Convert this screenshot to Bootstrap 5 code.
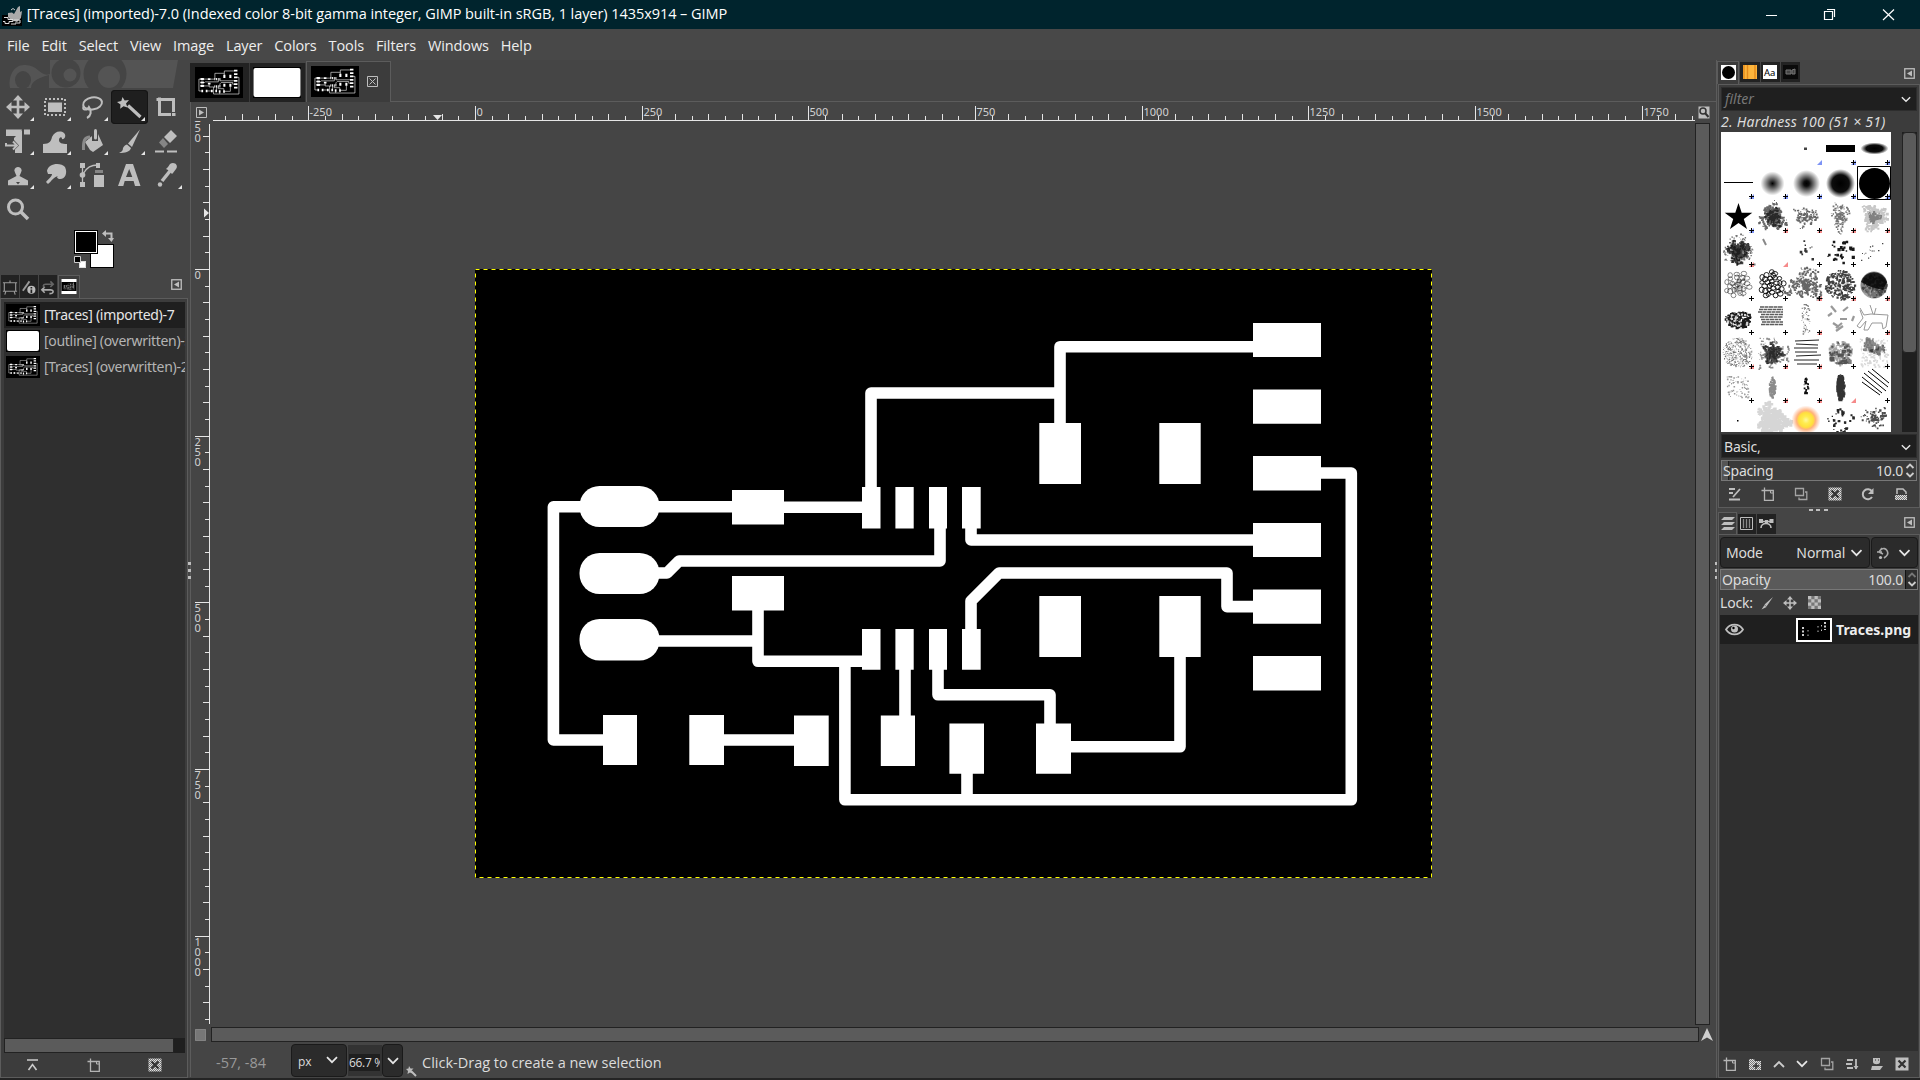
<!DOCTYPE html>
<html lang="en">
<head>
<meta charset="utf-8">
<title>GIMP</title>
<link href="https://cdn.jsdelivr.net/npm/bootstrap@5.3.0/dist/css/bootstrap.min.css" rel="stylesheet">
<style>
body{width:1920px;height:1080px;overflow:hidden;background:#454545;color:#dcdcdc;font-family:"Noto Sans","Open Sans",sans-serif;font-size:14px;line-height:20px}
svg{display:block;flex:none}
.titlebar{height:29px;background:#00242d;color:#fff;font-family:"Open Sans","Noto Sans",sans-serif;font-size:14.5px}
.titlebar .caption{letter-spacing:-.06px;margin-left:1px;padding-bottom:1px}
.menubar{height:31px;padding:2px 0 0 7px;gap:12px;background:#484848;color:#eee;font-family:"Open Sans","Noto Sans",sans-serif;font-size:14.5px;letter-spacing:-.13px}
.workarea{height:1018px}
.bottomedge{height:2px;background:#242424}
.leftdock{width:190px}
.banner{height:30px}
.toolgrid{display:grid;grid-template-columns:repeat(5,37px);grid-template-rows:repeat(4,34px)}
.toolgrid .sel{background:#1f1f1f;border-radius:4px;box-shadow:inset 0 0 0 1px #151515}
.ic{fill:#bebebe;stroke:none}
.ln{fill:none;stroke:#bebebe;stroke-width:2}
.swatches{height:49px}
.docktabs{height:23px;padding-left:1px}
.dtab{width:19px;height:20px;background:#222;margin-right:1px}
.docktabs .dtab{width:18px}
.dtab.on,.docktabs .dtab.on{background:#3c3c3c;border:1px solid #5c5c5c;border-bottom:0;height:23px;width:22px}
.dockbody{border:1px solid #5c5c5c;background:#3c3c3c}
.imglist{background:#2f2f2f;width:181px;height:736px;overflow:hidden;flex:none}
.imgrow{height:26px;padding-left:2px;gap:4px;color:#b4b4b4;white-space:nowrap;font-size:14px;letter-spacing:-.3px}
.imgrow.on{background:#1f1f1f;color:#e6e6e6}
.hbar{background:#5b5b5b;border:1px solid #222}
.listscroll{background:#1f1f1f;width:181px;height:15px;flex:none}
.center{width:1526px}
.imgtabs{height:42px}
.itab{background:#222;border-right:1px solid #3a3a3a}
.itab.on{background:#3c3c3c;border:1px solid #5c5c5c;border-bottom:0}
.tabline{border-bottom:1px solid #5c5c5c}
.viewframe{border-left:1px solid #5c5c5c}
.canvasarea{width:1483px;height:904px;padding:148px 0 0 264px}
.gbox{background:#2b2b2b;border:1px solid #1a1a1a;border-radius:4px}
.statusbar{height:33px;font-family:"Open Sans","Noto Sans",sans-serif;font-size:14.5px}
.rightdock{width:204px;border-left:1px solid #5c5c5c}
.entry{background:#1f1f1f;border:1px solid #2d2d2d}
.spin{border:1px solid #777;background:#3a3a3a;height:21px;letter-spacing:-.2px}
.spacingbar{background:linear-gradient(90deg,#555 6px,#222 6px,#222 7px,#3a3a3a 7px)}
.layers{background:#2f2f2f;height:436px}
.brushview{height:300px}
.nowrap{white-space:nowrap}
</style>
</head>
<body class="d-flex flex-column">
<svg width="0" height="0" class="position-absolute">
 <defs>
  <symbol id="pcb" viewBox="475 269 957 609" preserveAspectRatio="none">
   <rect x="475" y="269" width="957" height="609" fill="#000"/>
   <g fill="none" stroke="#fff" stroke-width="11.6" stroke-linejoin="round">
    <path d="M620 506.8H553.4V740H610M650 506.8H740M780 507.2H871V393H1060M1060 430V346.7H1260M1315 473H1351.3V799.8H844.9V661.3M971 520V540H1260M940 520V561H679L667 573H650M971 640V601L999 573H1227V606.6H1260M758 605V661.3H870M650 641H758M905 660V720M938 660V694.8H1050V730M1065 746.8H1180V650M967 770V800M720 740H800"/>
   </g>
   <g fill="#fff">
    <rect x="579.5" y="486" width="80" height="41" rx="20"/><rect x="579.5" y="553" width="80" height="41" rx="20"/><rect x="579.5" y="619" width="80" height="41.500" rx="20"/>
    <path d="M732 490h52v34.600h-52zM732 576h52v34.400h-52zM862 487h18.500v41.600h-18.500zM895.400 487h18.300v41.600h-18.300zM929 487h18v41.600h-18zM962 487h18.700v41.600h-18.700zM862 629h18.500v40.700h-18.500zM895.400 629h18.300v40.700h-18.300zM929 629h18v40.700h-18zM962 629h18.700v40.700h-18.700z"/>
    <path d="M1039.300 423H1081V484H1039.300zM1159.300 423H1200.700V484H1159.300zM1039.300 596H1081V657H1039.300zM1159.300 596H1200.700V657H1159.300z"/>
    <path d="M1253 323h68v34h-68zM1253 389.400h68v34.400h-68zM1253 456h68v34.400h-68zM1253 523h68v34h-68zM1253 589.400h68v34.400h-68zM1253 656h68v34.400h-68z"/>
    <path d="M603 715h34v50h-34zM689.300 715h34.700v50h-34.700zM794 715.400h34.700v50.600h-34.700zM880.800 715.400h34.200v50.600h-34.200zM949.400 723.400h34.600v50.300h-34.600zM1036 723.400h35v50.300h-35z"/>
   </g>
  </symbol>
  <symbol id="collapse" viewBox="0 0 11 11"><rect x=".75" y=".75" width="9.500" height="9.500" fill="none" stroke="#bebebe" stroke-width="1.300"/><path d="M8 2.500v6L3 5.500z" fill="#bebebe"/></symbol>
  <symbol id="chev" viewBox="0 0 12 8"><path d="M1 1.200L6 6.200L11 1.200" fill="none" stroke="#e6e6e6" stroke-width="1.700"/></symbol>
  <symbol id="newdoc" viewBox="0 0 14 14"><path d="M5.500 3.500H12.300V13.300H3.500V6M3.500 .5V6.500M.5 3.500H6.500" fill="none" stroke="#b4b4b4" stroke-width="1.300"/><path d="M9.500 3v3h3" fill="none" stroke="#b4b4b4"/></symbol>
  <symbol id="dup" viewBox="0 0 14 14"><path d="M1.500 1.500H9.500V8.500H1.500zM11 5H12.800V12.500H5V10.500" fill="none" stroke="#a4a4a4" stroke-width="1.300"/></symbol>
  <symbol id="del" viewBox="0 0 14 14"><rect x=".5" y=".5" width="13" height="13" fill="#bebebe"/><path d="M3.500 3.500L10.500 10.500M10.500 3.500L3.500 10.500" stroke="#333" stroke-width="2.200"/></symbol>
  <pattern id="chk" width="2" height="2" patternUnits="userSpaceOnUse"><rect width="2" height="2" fill="#777"/><path d="M0 0h1v1h-1zM1 1h1v1h-1z" fill="#e0e0e0"/></pattern>
  <symbol id="delx" viewBox="0 0 14 14"><rect x=".5" y=".5" width="13" height="13" fill="url(#chk)"/><path d="M3.500 3.500L10.500 10.500M10.500 3.500L3.500 10.500" stroke="#333" stroke-width="2.200"/></symbol>
  <symbol id="more" viewBox="0 0 4 4"><path d="M4 0V4H0z" fill="#e6e6e6"/></symbol>
 </defs>
</svg>

<header class="titlebar d-flex align-items-center">
 <svg width="22" height="24" viewBox="0 0 22 24"><path d="M2 12h20v11H2z" fill="#000"/><path d="M8 10L12 9.500L14 11L18 4L20 3L20 9L22 8L21 15L17 19L11 17L8 14z" fill="#aaa"/><path d="M11 7l2-1.500 2 1.500" stroke="#ccc" fill="none"/><path d="M4 14.500h4v2h5v2H9v2H5v-2H3M14 17h6v3h-5M11 21h5" fill="none" stroke="#ddd"/></svg>
 <span class="caption nowrap">&nbsp;[Traces] (imported)-7.0 (Indexed color 8-bit gamma integer, GIMP built-in sRGB, 1 layer) 1435x914 – GIMP</span>
 <div class="ms-auto d-flex">
  <svg width="58" height="28" viewBox="0 0 58 28"><path d="M20 14.500H31" stroke="#fff"/></svg>
  <svg width="58" height="28" viewBox="0 0 58 28"><path d="M20.500 10.500h8v8h-8zM23 8.500h7.500v7.500" fill="none" stroke="#fff" stroke-width="1.200"/></svg>
  <svg width="58" height="28" viewBox="0 0 58 28"><path d="M21 8.500L32 19M32 8.500L21 19" stroke="#fff" stroke-width="1.200"/></svg>
 </div>
</header>
<nav class="menubar d-flex align-items-center">
 <span>File</span><span>Edit</span><span>Select</span><span>View</span><span>Image</span><span>Layer</span><span>Colors</span><span>Tools</span><span>Filters</span><span>Windows</span><span>Help</span>
</nav>

<main class="workarea d-flex">
 <aside class="leftdock d-flex flex-column">
  <svg class="banner" width="190" height="30" viewBox="0 0 190 30"><path d="M50 0H178L173 28H10C8 16 14 5 24 5C38 4 41 18 50 14z" fill="#545454"/><circle cx="66" cy="13" r="14.500" fill="#454545"/><circle cx="70" cy="15" r="6.500" fill="#545454"/><circle cx="105" cy="14" r="21.500" fill="#454545"/><circle cx="109" cy="17" r="11" fill="#545454"/><ellipse cx="23" cy="20" rx="8" ry="9" fill="#454545"/><path d="M31 28C31 20 42 17 49 15V28z" fill="#454545"/><path d="M0 28H190V30H0z" fill="#454545"/></svg>
  <div class="toolgrid">
   <svg width="37" height="34"><path d="M18 9V25M10 17H26" stroke="#bebebe" stroke-width="2.600"/><path class="ic" d="M18 5l5 5.500h-10zM18 29l5-5.500h-10zM6 17l5.500-5v10zM30 17l-5.500-5v10z"/><use href="#more" x="30" y="27" width="4" height="4"/></svg>
   <svg width="37" height="34"><rect x="8" y="9" width="20" height="16" class="ln" stroke-dasharray="2 2"/><rect x="11" y="12.500" width="14" height="9.500" class="ic"/><use href="#more" x="30" y="27" width="4" height="4"/></svg>
   <svg width="37" height="34"><ellipse cx="18.500" cy="13.500" rx="9.500" ry="6" transform="rotate(-10 18 13)" class="ln"/><path class="ln" d="M10 16c-3 4 3 5 5 1c3 4 2 9-2 11"/><use href="#more" x="30" y="27" width="4" height="4"/></svg>
   <svg width="37" height="34" class="sel"><path class="ic" d="M11.500 7l2.200 3.500 4.300-.5-3 3.500 1.500 4-4-1.300-3.300 2.600.3-4.300-3.500-2.500 4.300-1z"/><path d="M17 15.500L29.500 27" stroke="#bebebe" stroke-width="3.200"/><use href="#more" x="30" y="27" width="4" height="4"/></svg>
   <svg width="37" height="34"><path d="M8.500 9.500H25.500V22M11.500 7.500V24.500H23" fill="none" stroke="#bebebe" stroke-width="3"/><path class="ic" d="M24 23h3.500v3h-3.500z"/></svg>

   <svg width="37" height="34"><path class="ic" d="M6 5.500H22L17 12H6zM24 5.500H30V10.500H24zM22 6V29H15V25.500L19 21.500L14 16V14z"/><path class="ln" d="M6 19v2.500h10M13 17.500l4 4-4 4"/><use href="#more" x="30" y="27" width="4" height="4"/></svg>
   <svg width="37" height="34"><path class="ic" d="M6 29V20C13 20 14 17 15 13C17 8 23 6 27 9C30 12 27 16 25 15C25 12 22 13 22 16C22 19 25 20 30 20V29z"/><use href="#more" x="30" y="27" width="4" height="4"/></svg>
   <svg width="37" height="34"><path class="ic" d="M11 18L18 12V17h6v-7L29 21L19 28L16 26z"/><path d="M21.500 6.500V14" stroke="#bebebe" stroke-width="3" stroke-linecap="round"/><path d="M16 13C11 13 9 16 9.500 26" fill="none" stroke="#8a8a8a" stroke-width="3"/><use href="#more" x="30" y="27" width="4" height="4"/></svg>
   <svg width="37" height="34"><path class="ic" d="M29 5.500L21 23L17 19.500zM16 20.500l4 3.500c-1 4-6 5-12 5c3-1 4-3 4-5c1-2 2-3 4-3.500z"/><use href="#more" x="30" y="27" width="4" height="4"/></svg>
   <svg width="37" height="34"><path class="ic" d="M23 6L29 12L22 19L16 13zM7 26.500h9v2h-9zM19 26.500h10v2h-10z"/><path fill="#858585" d="M15 14l5 6-4 4-5-5.500z"/></svg>

   <svg width="37" height="34"><path class="ic" d="M18 9a3.500 3.500 0 0 1 3 5.500L19.500 18L28 22.500V27.300H8V22.500L16.500 18L15 14.500A3.500 3.500 0 0 1 18 9z"/><path d="M16 24l2 2.500 2-2.500z" fill="#454545"/><use href="#more" x="30" y="27" width="4" height="4"/></svg>
   <svg width="37" height="34"><path class="ic" d="M10 13C11 5 24 4 28 9C31 15 28 22 22 21C19 20 20 18 22 18C17 18 14 24 11 26L9 24C11 21 15 19 15 16H11z"/><use href="#more" x="30" y="27" width="4" height="4"/></svg>
   <svg width="37" height="34"><path class="ic" d="M6 5h5v5h-5zM6 24h5v5h-5zM22 5h4v5h-4zM20 17h10v12h-10z"/><path fill="#858585" d="M21 12h8v3h-8z"/><circle cx="8.500" cy="17" r="2.800" class="ic"/><path fill="none" stroke="#bebebe" stroke-width="1.300" d="M8.500 8V26M9 16C13 9 17 7 24 7"/></svg>
   <svg width="37" height="34"><path class="ic" fill-rule="evenodd" d="M15 6H22L29.500 28H24L22.600 23H13.700L12.300 28H7zM18.200 11L15 19H21.300z"/></svg>
   <svg width="37" height="34"><path class="ic" d="M22 6C26 3 31 7 28 11L25 15L24 16L20 12L18 11L20 9z"/><path d="M22 13L14 23" stroke="#bebebe" stroke-width="3.500"/><circle cx="12" cy="26.500" r="2.200" class="ic"/><use href="#more" x="30" y="27" width="4" height="4"/></svg>

   <svg width="37" height="34"><circle cx="15.500" cy="15" r="7" fill="none" stroke="#bebebe" stroke-width="3"/><path d="M21 20L28 27" stroke="#bebebe" stroke-width="3.500"/></svg>
  </div>
  <svg class="swatches" width="190" height="49" viewBox="0 226 190 49"><path d="M90 244h24v24h-24z" fill="#000"/><path d="M91 245h22v22h-22z" fill="#fff"/><path d="M74 230h24v24h-24z" fill="#000"/><path d="M75 231h22v22h-22z" fill="#fff"/><path d="M76 232h20v20h-20z" fill="#000"/><path d="M105 233.500H111.500V239" fill="none" stroke="#bebebe" stroke-width="2"/><path class="ic" d="M102 233.500l4-3.500v7zM111.500 242l-3.500-4h6z"/><path d="M79 261h7v7h-7z" fill="#ddd"/><path d="M80 262h5v5h-5z" fill="#fff"/><path d="M74.500 256.500h6v6h-6z" fill="#000" stroke="#ccc"/></svg>
  <div class="docktabs d-flex align-items-end">
   <div class="dtab h-100 pt-1"><svg width="18" height="17" viewBox="0 0 19 17"><path d="M3.500 3.500h12v9h-12zM2 3.500h15M2 12.500h15M9.500 1v2M5 13l-1 3M14 13l1 3" fill="none" stroke="#999" stroke-width="1.200"/></svg></div>
   <div class="dtab h-100 pt-1"><svg width="18" height="17" viewBox="0 0 19 17"><path d="M3 12L10 2" stroke="#999" stroke-width="2"/><circle cx="12" cy="11" r="4.300" fill="#bbb"/><path d="M12 8v1.500M12 10.500v4" stroke="#222" stroke-width="1.800"/></svg></div>
   <div class="dtab h-100 pt-1"><svg width="18" height="17" viewBox="0 0 19 17"><path d="M3 11H12C16 11 16 15 11 15M6 8L3 11L6 14" fill="none" stroke="#aaa" stroke-width="1.700"/><path d="M14 5H7C4 5 4 8 6 8M12 2l3 3-3 3" fill="none" stroke="#666" stroke-width="1.700"/></svg></div>
   <div class="dtab on"><svg width="20" height="20" viewBox="0 0 20 20"><path d="M2.500 3h15v15h-15z" fill="#fff"/><path d="M2.500 6h15v9h-15z" fill="#000"/><use href="#pcb" x="3.500" y="6" width="13" height="9"/></svg></div>
   <svg width="11" height="11" class="ms-auto me-2 mb-2"><use href="#collapse" width="11" height="11"/></svg>
  </div>
  <div class="dockbody d-flex flex-column flex-grow-1" style="width:188px;padding:3px 0 0 3px">
   <div class="imglist">
    <div class="imgrow on d-flex align-items-center"><svg width="34" height="22"><use href="#pcb" width="34" height="22"/></svg><span>[Traces] (imported)-7</span></div>
    <div class="imgrow d-flex align-items-center"><svg width="34" height="22"><path d="M0 0h34v22h-34z"/><rect x="1" y="1" width="32" height="20" rx="2" fill="#fff"/></svg><span>[outline] (overwritten)-3</span></div>
    <div class="imgrow d-flex align-items-center"><svg width="34" height="22"><use href="#pcb" width="34" height="22"/></svg><span>[Traces] (overwritten)-2</span></div>
   </div>
   <div class="listscroll"><div class="hbar h-100" style="width:170px"></div></div>
   <div class="d-flex align-items-center flex-grow-1" style="padding-left:22px;gap:47px"><svg width="14" height="14"><path d="M1 2H12M2.500 12L6.500 6.500L10.500 12" fill="none" stroke="#ccc" stroke-width="1.600"/></svg><svg width="14" height="14"><use href="#newdoc" width="14" height="14"/></svg><svg width="14" height="14"><use href="#delx" width="14" height="14"/></svg></div>
  </div>
 </aside>

 <section class="center d-flex flex-column">
  <div class="imgtabs d-flex align-items-end">
   <div class="itab" style="width:60px;height:39px;padding:4px 0 0 5px"><svg width="48" height="31"><use href="#pcb" width="48" height="31"/></svg></div>
   <div class="itab" style="width:56px;height:39px;padding:4px 0 0 3px"><svg width="48" height="31"><path d="M0 0h48v31h-48z"/><rect x=".5" y="1" width="47" height="29" rx="2" fill="#fff"/></svg></div>
   <div class="itab on d-flex" style="width:85px;height:41px;padding:4px 0 0 4px;gap:8px"><svg width="48" height="31"><use href="#pcb" width="48" height="31"/></svg><svg width="11" height="31"><path d="M.5 10.500h10v10h-10zM2.500 12.500l6 6M8.500 12.500l-6 6" fill="none" stroke="#bebebe"/></svg></div>
   <div class="tabline flex-grow-1"></div>
  </div>
  <div class="viewframe d-flex" style="height:19px;padding-left:1px">
   <svg width="19" height="19"><path d="M4.500 5.500h10v10h-10z" fill="none" stroke="#bebebe"/><path d="M7 7.500v6l5-3z" fill="#bebebe"/></svg>
   <svg id="hruler" width="1484" height="19" viewBox="211 102 1484 19"></svg>
   <svg width="19" height="19"><path d="M3.500 4.500h11v12h-11z" fill="#bebebe"/><circle cx="8" cy="9" r="3" fill="none" stroke="#333" stroke-width="1.500"/><path d="M10 11l3.500 4" stroke="#333" stroke-width="2"/></svg>
  </div>
  <div class="viewframe d-flex" style="height:904px;padding-left:1px">
   <svg id="vruler" width="19" height="904" viewBox="192 121 19 904"></svg>
   <div class="canvasarea"><svg width="957" height="609"><use href="#pcb" width="957" height="609"/><rect x=".5" y=".5" width="956" height="608" fill="none" stroke="#ff0" stroke-dasharray="4 4"/></svg></div>
   <div class="hbar" style="width:15px;height:902px;margin:2px 0 0 1px"></div>
  </div>
  <div class="viewframe d-flex align-items-center" style="height:19px;padding-left:4px;gap:5px">
   <svg width="11" height="12"><rect x=".5" y=".5" width="10" height="11" fill="#777" stroke="#aaa" stroke-dasharray="1 1"/></svg>
   <div class="hbar" style="width:1488px;height:15px"></div>
   <svg width="14" height="14" style="margin-left:-4px"><path d="M7 0l6 13-6-3.500-6 3.500z" fill="#d0d0d0"/></svg>
  </div>
  <div class="viewframe statusbar d-flex align-items-center">
   <span class="pt-1" style="color:#999;width:75px;margin-left:25px">-57, -84</span>
   <div class="gbox d-flex align-items-center justify-content-between" style="width:56px;height:33px;padding:2px 8px 0 6px;font-size:12px"><span>px</span><svg width="12" height="8" class="mb-1"><use href="#chev" width="12" height="8"/></svg></div>
   <div style="background:#333;width:34px;height:31px;margin-left:1px;padding:9px 0 0 1px"><div class="nowrap overflow-hidden" style="background:#1f1f1f;width:31px;height:17px;font-size:12px;line-height:17px;letter-spacing:-.3px">66.7 %</div></div>
   <div class="gbox d-flex align-items-center justify-content-center" style="width:21px;height:33px"><svg width="12" height="8"><use href="#chev" width="12" height="8"/></svg></div>
   <svg width="12" height="12" class="align-self-end" style="margin-left:2px"><path class="ic" d="M4 1l1.500 2.500 3 0-2 2 1 3-2.500-1-2.500 1.500.5-3-2-2 2.500-.5z"/><path d="M6 6l5 5" stroke="#bebebe" stroke-width="2"/></svg>
   <span class="pt-1" style="margin-left:5px">Click-Drag to create a new selection</span>
  </div>
 </section>

 <aside class="rightdock d-flex flex-column">
  <div class="d-flex align-items-end" style="height:25px">
   <div class="dtab on"><svg width="20" height="22"><path d="M3 3h15v15h-15z" fill="#fff"/><circle cx="10.500" cy="10.500" r="6.500"/></svg></div>
   <div class="dtab" style="width:20px;margin-bottom:2px"><svg width="20" height="20"><path d="M3 3h14v14h-14z" fill="#fdb53c"/><path d="M4 3v14M7.500 3v14M15 3v14" stroke="#e58a1c" stroke-width="1.400"/></svg></div>
   <div class="dtab" style="margin-bottom:2px"><svg width="20" height="20"><path d="M2 3h14v14h-14z" fill="#fff"/><text x="3" y="13.500" font-size="9.500" fill="#000">Aa</text></svg></div>
   <div class="dtab" style="margin-bottom:2px"><svg width="20" height="20"><path d="M2 3h15v14h-15z" fill="#0a0a0a"/><path d="M5 8h5v4h-5zM11 8l3-1v5h-3z" fill="#444" stroke="#777"/></svg></div>
   <svg width="11" height="11" class="ms-auto" style="margin:0 5px 5px 0"><use href="#collapse" width="11" height="11"/></svg>
  </div>
  <div class="dockbody" style="height:424px;margin-left:1px;padding:2px 2px 0 2px">
   <div class="entry d-flex align-items-center justify-content-between" style="height:24px;padding:0 5px 0 3px"><i style="color:#777">filter</i><svg width="10" height="7"><use href="#chev" width="10" height="7"/></svg></div>
   <div class="fst-italic nowrap" style="height:21px;line-height:21px;letter-spacing:.28px">2. Hardness 100 (51 × 51)</div>
   <div class="brushview d-flex">
    <svg id="brushes" width="170" height="300" viewBox="0 0 170 300"></svg>
    <div class="ms-auto" style="width:15px;background:#1f1f1f"><div class="hbar rounded-1" style="height:221px"></div></div>
   </div>
   <div class="entry d-flex align-items-center justify-content-between" style="height:24px;margin-top:2px;padding:2px 5px 0 2px"><span style="letter-spacing:-.2px">Basic,</span><svg width="10" height="7"><use href="#chev" width="10" height="7"/></svg></div>
   <div class="spin spacingbar d-flex align-items-center" style="margin-top:2px;padding:0 0 0 1px"><span>Spacing</span><span class="ms-auto">10.0</span><svg width="12" height="17" style="margin-left:1px"><path d="M2.500 6L6 2.500L9.500 6M2.500 11L6 14.500L9.500 11" fill="none" stroke="#ccc" stroke-width="1.800"/></svg></div>
   <div class="d-flex align-items-center justify-content-between" style="height:26px;padding:0 9px 0 7px">
    <svg width="14" height="14"><path d="M1 2h6M1 6h4M1 12.500h11M5 10l7-8" fill="none" stroke="#bebebe" stroke-width="1.800"/></svg><svg width="14" height="14"><use href="#newdoc" width="14" height="14"/></svg><svg width="14" height="14"><use href="#dup" width="14" height="14"/></svg><svg width="14" height="14"><use href="#delx" width="14" height="14"/></svg><svg width="14" height="14"><path d="M11 4.500A5 5 0 1 0 11 10" fill="none" stroke="#bebebe" stroke-width="2"/><path class="ic" d="M12.500 1v6H7z"/></svg><svg width="14" height="14"><path d="M1 8h12v5h-12z" fill="url(#chk)"/><path d="M3 7V2h6l3 3v2" fill="none" stroke="#bebebe" stroke-width="1.500"/></svg>
   </div>
  </div>
  <svg width="203" height="4"><path d="M92 1h4v2h-4zM99 1h4v2h-4zM107 1h4v2h-4z" fill="#bebebe"/></svg>
  <div class="d-flex align-items-start" style="height:22px;padding-left:1px">
   <div class="dtab on" style="height:22px;width:19px"><svg width="18" height="20"><path class="ic" d="M5 4h11l-3 3H2zM5 9h11l-3 3H2zM5 14h11l-3 3H2z"/></svg></div>
   <div class="dtab" style="width:18px;margin-top:2px"><svg width="18" height="19"><path d="M2.500 3.500h12v12h-12z" fill="none" stroke="#bebebe"/><path d="M5.500 5v9M8.500 5v9M11.500 5v9" stroke="#888" stroke-width="1.300"/></svg></div>
   <div class="dtab" style="margin-top:2px"><svg width="18" height="19"><path d="M4 14C4 8 14 8 14 14M3 7.500h13" fill="none" stroke="#bebebe" stroke-width="1.600"/><path class="ic" d="M2 5h4v4h-4zM8 6h3v3h-3zM12.500 5h4v4h-4z"/></svg></div>
   <svg width="11" height="11" class="ms-auto" style="margin:5px 5px 0 0"><use href="#collapse" width="11" height="11"/></svg>
  </div>
  <div class="dockbody flex-grow-1" style="margin-left:1px;padding:2px 1px 0">
   <div class="d-flex" style="gap:1px">
    <div class="gbox d-flex align-items-center" style="width:151px;height:31px;padding:0 6px 0 5px"><span style="letter-spacing:-.25px">Mode</span><span class="ms-auto" style="letter-spacing:-.1px;margin-right:5px">Normal</span><svg width="13" height="8"><use href="#chev" width="13" height="8"/></svg></div>
    <div class="gbox d-flex align-items-center justify-content-between" style="width:47px;height:31px;padding:0 6px 0 4px"><svg width="14" height="14"><path d="M5 3.500C10 0 14 7 10 10.500L8 12M1 6h5M6 2L3 6l4 2" fill="none" stroke="#aaa" stroke-width="1.600"/><circle cx="4.500" cy="11.500" r="1.600" class="ic"/></svg><svg width="13" height="8"><use href="#chev" width="13" height="8"/></svg></div>
   </div>
   <div class="spin d-flex align-items-center" style="margin-top:1px;padding:0 0 0 1px;background:#5a5a5a"><span>Opacity</span><span class="ms-auto">100.0</span><svg width="12" height="19" style="background:#2f2f2f;border-left:1px solid #111;margin-left:2px"><path d="M2.500 7L6 3.500L9.500 7" fill="none" stroke="#777" stroke-width="1.800"/><path d="M2.500 12L6 15.500L9.500 12" fill="none" stroke="#ccc" stroke-width="1.800"/></svg></div>
   <div class="d-flex align-items-center" style="height:25px;letter-spacing:-.2px"><span>Lock:</span>
    <svg width="14" height="14" style="margin-left:7px"><path class="ic" d="M13 1L6.500 10.500L4.500 8.500zM4.500 9l2 2-5 2.500z"/></svg>
    <svg width="14" height="14" style="margin-left:9px"><path d="M7 2v10M2 7h10" stroke="#bebebe" stroke-width="1.500"/><path class="ic" d="M7 0l3 3.500h-6zM7 14l3-3.500h-6zM0 7l3.500-3v6zM14 7l-3.500-3v6z"/></svg>
    <svg width="13" height="13" style="margin-left:11px"><path d="M0 0h13v13h-13z" fill="#777"/><path class="ic" d="M0 0h3.300v3.300H0zM6.500 0h3.300v3.300H6.500zM3.300 3.300h3.200v3.200H3.300zM9.800 3.300H13v3.200H9.800zM0 6.500h3.300v3.300H0zM6.500 6.500h3.300v3.300H6.500zM3.300 9.800h3.200V13H3.300zM9.800 9.800H13V13H9.800z"/></svg>
   </div>
   <div class="layers">
    <div class="d-flex align-items-center" style="height:29px;background:#1f1f1f;padding-left:5px"><svg width="19" height="13"><path d="M1 6.500C5 0 14 0 18 6.500C14 13 5 13 1 6.500z" fill="none" stroke="#bebebe" stroke-width="1.800"/><circle cx="9.500" cy="6" r="3.500" class="ic"/><circle cx="8.500" cy="5" r="1.200"/></svg>
     <svg width="36" height="24" style="margin-left:52px"><path d="M0 0h36v24h-36z" fill="#fff"/><path d="M2 2h32v20h-32z"/><path d="M7 9v10M29 4v8" stroke="#ccc" stroke-width="2" stroke-dasharray="2 1.500"/><path d="M12 12v6M22 8v8M25.500 7v8" stroke="#bbb" stroke-dasharray="1.500 3"/></svg><b style="margin-left:4px;color:#eee">Traces.png</b></div>
   </div>
   <div class="d-flex align-items-center justify-content-between" style="height:26px;padding:0 9px 0 3px">
    <svg width="14" height="14"><use href="#newdoc" width="14" height="14"/></svg>
    <svg width="14" height="14"><path d="M1 2h5l1 2h6v9h-12z" fill="url(#chk)"/><path d="M8 6v6M5 9h6" stroke="#333" stroke-width="1.500"/></svg>
    <svg width="12" height="8"><path d="M1 7L6 2L11 7" fill="none" stroke="#ccc" stroke-width="1.800"/></svg>
    <svg width="12" height="8"><use href="#chev" width="12" height="8"/></svg>
    <svg width="14" height="14"><use href="#dup" width="14" height="14"/></svg>
    <svg width="14" height="14"><path d="M2 3h6M1 7h6M2 11h6M11 2v10" stroke="#bebebe" stroke-width="1.800"/><path class="ic" d="M8.500 9h5l-2.500 3.500z"/></svg>
    <svg width="14" height="14"><path class="ic" d="M3 1h7v4c0 3-7 3-7 0zM2 9h11l-3 4H1z"/><path d="M5 3h1M8 3h1" stroke="#333"/></svg>
    <svg width="14" height="14"><use href="#del" width="14" height="14"/></svg>
   </div>
  </div>
 </aside>
</main>
<div class="bottomedge"></div>
<svg width="4" height="20" class="position-absolute" style="left:188px;top:561px"><path d="M0 1h3v3H0zM0 8h3v3H0zM0 15h3v3H0z" fill="#bebebe"/></svg>
<svg width="4" height="20" class="position-absolute" style="left:1715px;top:561px"><path d="M0 1h2v3H0zM0 8h2v3H0zM0 15h2v3H0z" fill="#bebebe"/></svg>

<script src="https://cdn.jsdelivr.net/npm/bootstrap@5.3.0/dist/js/bootstrap.bundle.min.js"></script>
<script>
// Rulers: one tick every 25 image pixels at 66.7 % zoom
const STEP = 50 / 3, OX = 475, OY = 269;
let h = '<path d="M213 120.500H1695" stroke="#e6e6e6"/>';
for (let n = -15; n <= 73; n++) {
  const x = Math.round(OX + n * STEP) + .5, len = n % 10 === 0 ? 14 : n % 2 === 0 ? 6 : 4;
  h += `<path d="M${x} ${120 - len}V120" stroke="#e6e6e6"/>`;
  if (n % 10 === 0) h += `<text x="${x + 1}" y="116" font-size="11" fill="#d2d2d2">${n * 25}</text>`;
}
h += '<path d="M433 115h9l-4.500 5z" fill="#e6e6e6"/>';
document.getElementById('hruler').innerHTML = h;
let v = '<path d="M209.500 124V1024" stroke="#e6e6e6"/>';
for (let n = -10; n <= 45; n++) {
  const y = Math.round(OY + n * STEP) + .5, len = n % 10 === 0 ? 14 : n % 2 === 0 ? 6 : 4;
  if (y > 124) v += `<path d="M${209 - len} ${y}H209" stroke="#e6e6e6"/>`;
  if (n % 10 === 0) String(n * 25).split('').forEach((c, i) => {
    v += `<text x="194.500" y="${y + 9.500 + i * 10}" font-size="11" fill="#d2d2d2">${c}</text>`;
  });
}
v += '<path d="M204 208.500v9l5-4.500z" fill="#e6e6e6"/>';
document.getElementById('vruler').innerHTML = v;

// Brush previews, 34 px cells
let seed = 7;
const rnd = () => (seed = (seed * 16807) % 2147483647) / 2147483647;
function dots(cx, cy, rx, ry, n, s, o, mode) {
  // mode 1 fills a rectangle, mode 2 a ragged clump, otherwise an even disc
  let d = '';
  const p1 = rnd() * 6, p2 = rnd() * 6;
  for (let i = 0; i < n; i++) {
    const a = rnd() * 6.283;
    let r = Math.sqrt(rnd());
    if (mode === 2) r = Math.pow(rnd(), .8) * (1 + .25 * Math.sin(3 * a + p1) + .15 * Math.sin(7 * a + p2)) * 1.15;
    const x = mode === 1 ? cx + (rnd() * 2 - 1) * rx : cx + Math.cos(a) * r * rx;
    const y = mode === 1 ? cy + (rnd() * 2 - 1) * ry : cy + Math.sin(a) * r * ry;
    const w = s * (.5 + rnd());
    d += `M${x.toFixed(1)} ${y.toFixed(1)}h${w.toFixed(1)}v${w.toFixed(1)}h-${w.toFixed(1)}z`;
  }
  return `<path d="${d}" opacity="${o}"/>`;
}
const blur = (id, solid) => `<radialGradient id="${id}"><stop offset="0"/><stop offset="${solid}" stop-opacity=".95"/><stop offset="1" stop-opacity="0"/></radialGradient>`;
let b = `<defs>${blur('g0', .05)}${blur('g1', .2)}${blur('g2', .6)}<radialGradient id="sun"><stop offset="0" stop-color="#fff8a0"/><stop offset=".25" stop-color="#ffec50"/><stop offset=".5" stop-color="#ffe03c"/><stop offset=".65" stop-color="#ffb27a"/><stop offset="1" stop-color="#ffb28a" stop-opacity="0"/></radialGradient></defs><path d="M0 0h170v300H0z" fill="#fff"/>`;
const sp = (c, r, rx, ry, n, s, o, m) => { b += dots(c * 34 + 16.5, r * 34 + 16.5, rx, ry, n, s, o, m); };
b += '<path d="M83 15.500h3v2.500h-3z" fill="#444"/><path d="M105 13h29v7h-29z"/><ellipse cx="153.500" cy="16.500" rx="14" ry="6" fill="url(#g2)"/><path d="M3 50.500h29" stroke="#000"/>';
b += '<circle cx="51.500" cy="51.500" r="12" fill="url(#g0)"/><circle cx="85.500" cy="51.500" r="13.500" fill="url(#g1)"/><circle cx="119.500" cy="51.500" r="14.500" fill="url(#g2)"/>';
b += '<path d="M136.500 34.500h33v33h-33z" fill="#fff" stroke="#000"/><circle cx="153.500" cy="51.500" r="15.500"/>';
b += '<path d="M17.500 71l3.200 9.800h10.600l-8.500 6.200 3.200 10-8.500-6-8.500 6 3.200-10-8.500-6.200h10.600z"/>';
sp(1,2,11,11,260,1.6,.6,2); sp(1,2,7,7,120,2,.6,2); sp(2,2,11,8,120,1.4,.6,2); sp(3,2,7,13,160,1.3,.55,2); sp(4,2,10,11,300,1.9,.22,2); sp(4,2,5,5,60,2,.35,2);
sp(0,3,13,14,200,1.3,.55,2); sp(0,3,9,10,240,2,.75,2);
b += '<path d="M42 107l3 6" stroke="#888" stroke-width="2"/>';
sp(2,3,11,11,10,2,.8); sp(3,3,14,12,28,2.300,.9); sp(4,3,13,13,14,1,.8,1);
// Cell textures: irregular rings around scattered centres
const rings = (c, r, R, n, w, o) => { const x = c * 34 + 16.5, y = r * 34 + 16.5; for (let i = 0; i < n; i++) { const a = i * 2.4 + rnd() * .4, q = R * Math.sqrt(i / n); b += `<ellipse cx="${(x + q * Math.cos(a)).toFixed(1)}" cy="${(y + q * Math.sin(a)).toFixed(1)}" rx="${(2 + rnd()).toFixed(1)}" ry="${(1.8 + rnd()).toFixed(1)}" fill="none" stroke="#000" stroke-width="${w}" opacity="${o}"/>`; } };
rings(0,4,13,24,.9,.5); sp(0,4,8,9,50,1.5,.35,2); rings(1,4,13,30,1,.85);
sp(2,4,15,13,330,1.5,.6,2); sp(3,4,15,15,260,1.6,.75);
b += '<circle cx="153" cy="153" r="13.500" fill="#888"/><path d="M140 150a13.500 13.500 0 0 1 26 0l-4 8-12-3z" fill="#1c1c1c"/>'; sp(4,4,12,11,140,1.9,.5); b += dots(148,160,7,4,60,1.6,.25).replace('<path', '<path fill="#fff"');
sp(0,5,13,8,170,2,.9); b += dots(17,187,12,7,50,1.5,.8).replace('<path', '<path fill="#fff"');
b += '<path d="M39 175h23M38 177.500h24M37 180h25M40 182.500h22M39 185h23M40 187.500h20M41 190h21M40 192.500h22" stroke="#333" stroke-width="1.300" stroke-dasharray="4 .5" opacity=".8"/>';
sp(2,5,4,15,60,1,.5,1);
b += '<g stroke="#999" stroke-width="2.200"><path d="M110 174l5 6M107 184l4-3M119 187h7M122 179l5-4M133 184l-2 5M112 191l6 4M121 191l-6 5M115 199l7-5"/></g>';
b += '<path d="M139 176l4 7 7-1 17 1-2 12-3 2-1-6h-10l-4 7h-4l2-9-6 7-3-2 6-8-3-8M149 173l3 9M155 176l-2 7" fill="none" stroke="#999"/>';
sp(0,6,15,15,420,.8,.55); sp(1,6,13,13,170,1.4,.45,2); sp(1,6,8,8,200,2.2,.7,2);
b += '<path d="M74 209l24-1M75 212l22 1M73 216h24M74 220h22M75 224l25-1M73 228h25M76 232h20" stroke="#222"/>';
sp(3,6,12,12,160,1.9,.35); sp(3,6,11,11,40,3.200,.5); sp(4,6,14,14,160,1.5,.15,1); b += dots(148,212,6,5,70,2.500,.45,2) + dots(157,218,7,4,40,2,.5,2);
sp(0,7,11,11,80,1.1,.4,1); sp(1,7,3,10,110,1.6,.45); sp(2,7,2,9,26,1.6,.95); sp(3,7,3.500,13,220,2,.8);
b += '<path d="M141 245l20 16M143 241l22 18M147 239l20 16M151 237l17 14M141 250l18 13" stroke="#000"/>';
b += '<path d="M16 288h1.500v1.500H16z"/>' + dots(50,287,13,13,480,2.4,.16,2);
b += '<circle cx="85" cy="288" r="14.500" fill="url(#sun)"/>' + dots(119,288,13,12,34,2,.85) + dots(153,285,12,9,90,1.6,.7,2);
// Size and kind marks in the cell corners
for (let r = 0; r < 8; r++) for (let c = 0; c < 5; c++) {
  if (r === 0 && c < 2) continue;
  const x = c * 34 + 30, y = r * 34 + 30, isBlue = r < 2 || (r === 2 && c === 0);
  const plain = (r === 3 && c > 1) || (r === 4 && c < 2) || (r === 5 && (c < 2 || c === 3)) || (r === 6 && c > 2) || (r === 7 && (c === 0 || c === 4));
  const only = (r === 0 && c === 2) || (r === 3 && c === 1) || (r === 7 && c === 3);
  if (!plain) b += `<path d="M${x + 3} ${y - 2}v5h-5z" fill="${isBlue ? '#7d93f5' : '#f58a8a'}"/>`;
  if (!only) b += `<path d="M${x - 2} ${y + .5}h5M${x + .5} ${y - 2}v5" stroke="#000"/>`;
}
document.getElementById('brushes').innerHTML = b;
</script>
</body>
</html>
